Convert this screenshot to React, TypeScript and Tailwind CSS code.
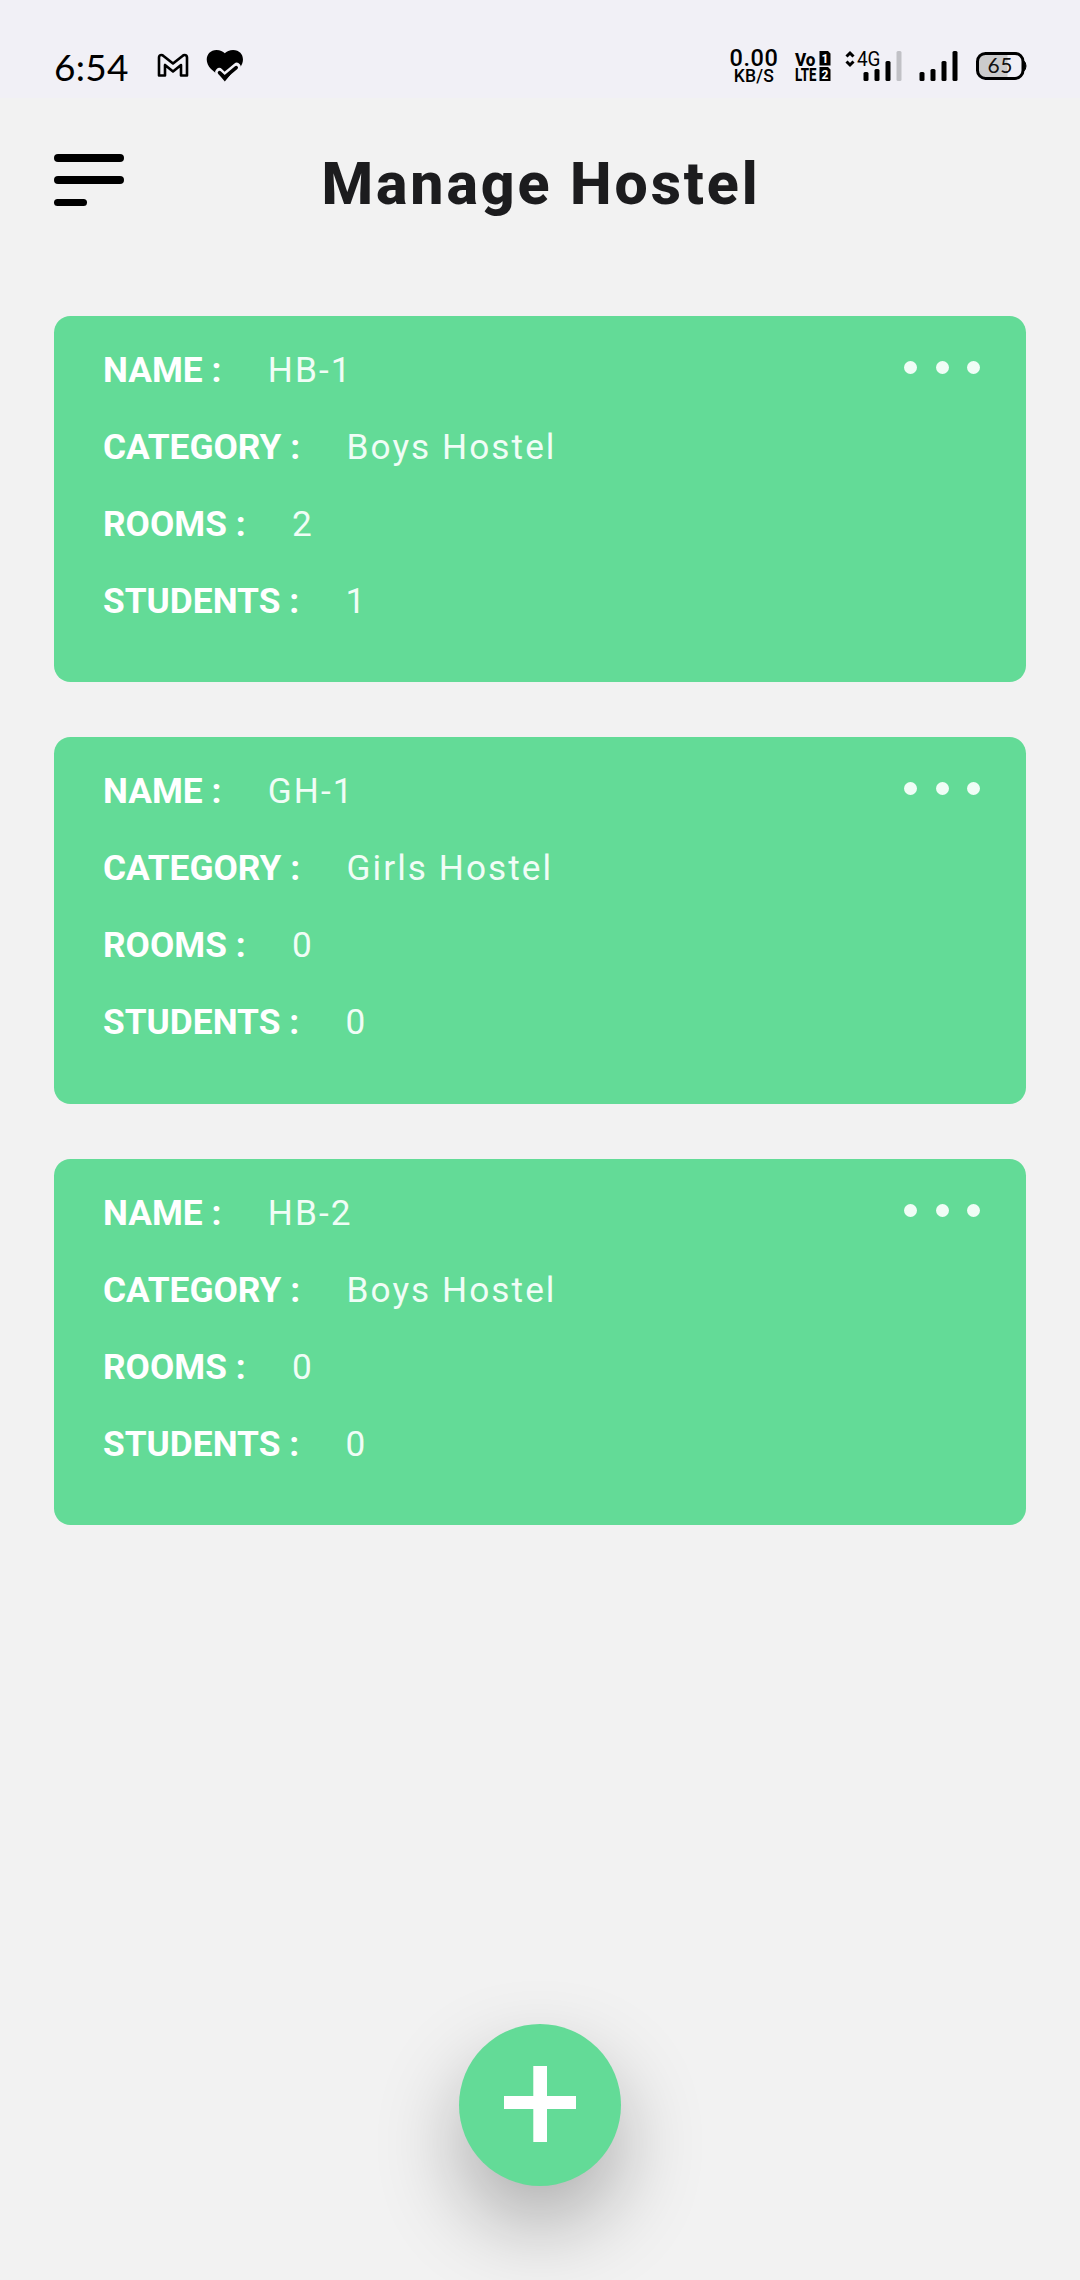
import React from "react";

type Hostel = { name: string; category: string; rooms: number; students: number };

const hostels: Hostel[] = [
  { name: "HB-1", category: "Boys Hostel", rooms: 2, students: 1 },
  { name: "GH-1", category: "Girls Hostel", rooms: 0, students: 0 },
  { name: "HB-2", category: "Boys Hostel", rooms: 0, students: 0 },
];

function GmailIcon() {
  return (
    <svg className="ml-[27px] mt-[53px] h-[25px] w-[32px]" viewBox="0 0 32 25" fill="none" stroke="#000" strokeWidth="2.6" strokeLinejoin="round">
      <path d="M2 22.500V4.500Q2 2 4.500 2Q5.500 2 6.500 3L16 10.500L25.500 3Q26.500 2 27.500 2Q30 2 30 4.500V22.500H24V12L16 18.500L8 12V22.500Z" />
    </svg>
  );
}

function HeartIcon() {
  return (
    <svg className="ml-[17px] mt-[49px] h-[34px] w-[38px]" viewBox="0 0 38 34">
      <path d="M18.800 32L5 20C-3 12 1 1 10.500 1C14 1 17 2.300 18.800 4.300C20.600 2.300 23.600 1 27.100 1C36.500 1 40 11 34 18.500Z" fill="#000" />
      <path d="M6 27L13.300 23L18.300 28L31 17.500L38 20V34H6Z" fill="#f1f0f6" />
      <path d="M13.300 23L18.300 28L30.700 17.800" fill="none" stroke="#f1f0f6" strokeWidth="8" strokeLinejoin="round" strokeLinecap="round" />
      <path d="M13.500 23.600L18.600 28.300L30.200 18.600" fill="none" stroke="#000" strokeWidth="3.600" strokeLinejoin="round" strokeLinecap="round" />
      <path d="M12.500 25L18.800 32.500L25 25L18.600 27Z" fill="#000" />
    </svg>
  );
}

function VolteIcon() {
  return (
    <svg className="mt-[50px] ml-[16px] h-[32px] w-[37px] overflow-visible" viewBox="0 0 37 32" fontFamily="Roboto" fontWeight="800">
      <text x="0" y="15.500" fontSize="18.500" textLength="20.500" lengthAdjust="spacingAndGlyphs">Vo</text>
      <text x="0" y="31" fontSize="18.500" textLength="21.500" lengthAdjust="spacingAndGlyphs">LTE</text>
      <path d="M24.500 1H33L35.500 3.500V15.500H24.500ZM24.500 17H33L35.500 19.500V31H24.500Z" />
      <text x="30" y="12.500" fontSize="12" textAnchor="middle" fill="#fff">1</text>
      <text x="30" y="28.500" fontSize="12" textAnchor="middle" fill="#fff">2</text>
    </svg>
  );
}

function MobileData() {
  return (
    <svg className="ml-[13px] mt-[50px] h-[32px] w-[57px] overflow-visible" viewBox="0 0 57 32">
      <path d="M1.500 6.500L5 3L8.500 6.500M1.500 11.500L5 15L8.500 11.500" fill="none" stroke="#000" strokeWidth="3" />
      <text x="12" y="15.800" fontFamily="Roboto" fontSize="20.500" textLength="23.500" lengthAdjust="spacingAndGlyphs">4G</text>
      <rect x="18.500" y="22" width="5" height="9" rx="1.500" />
      <rect x="29.500" y="19" width="5" height="12" rx="1.500" />
      <rect x="40.500" y="11" width="5" height="20" rx="1.500" />
      <rect x="51.500" y="1" width="5" height="30" rx="1.500" fill="#c1c1c6" />
    </svg>
  );
}

function SignalIcon() {
  return (
    <svg className="ml-[17px] mt-[50px] h-[32px] w-[39px]" viewBox="0 0 39 32">
      <rect x="0.500" y="22" width="5" height="9" rx="1.500" />
      <rect x="11.500" y="19" width="5" height="12" rx="1.500" />
      <rect x="22.500" y="11" width="5" height="20" rx="1.500" />
      <rect x="33.500" y="1" width="5" height="30" rx="1.500" />
    </svg>
  );
}

function BatteryIcon() {
  return (
    <svg className="ml-[18px] mt-[51px] h-[30px] w-[52px]" viewBox="0 0 52 30">
      <rect x="1.500" y="2.400" width="45.500" height="25" rx="8" fill="#f1f0f6" />
      <path d="M31.500 2.400H9.500a8 8 0 0 0-8 8v9a8 8 0 0 0 8 8H31.500Z" fill="#cbcbcc" />
      <rect x="1.500" y="2.400" width="45.500" height="25" rx="8" fill="none" stroke="#000" strokeWidth="3" />
      <path d="M47.500 9.500q2.500 2 2.500 5.500t-2.500 5.500Z" stroke="#000" strokeWidth="1" />
      <text x="11.500" y="21.800" fontFamily="Lato" fontSize="21" textLength="25" fill="#111">65</text>
    </svg>
  );
}

function StatusBar() {
  return (
    <header className="flex h-[98px] items-start bg-[#f1f0f6] pl-[54px] font-[Lato,sans-serif] text-black">
      <span className="mt-[46px] w-[76px] text-[37px] leading-[42px] tracking-[0.300px] whitespace-nowrap">6:54</span>
      <GmailIcon />
      <HeartIcon />
      <div className="mt-[48px] ml-auto flex w-[50px] flex-col items-center font-[Roboto,sans-serif] font-medium">
        <span className="text-[23.500px] leading-[20px] tracking-[0.600px]">0.00</span>
        <span className="text-[17.500px] leading-[17px] tracking-[0.200px]">KB/S</span>
      </div>
      <div className="flex items-start pr-[52px] font-[Roboto,sans-serif]">
        <VolteIcon />
        <MobileData />
        <SignalIcon />
        <BatteryIcon />
      </div>
    </header>
  );
}

function Field({ label, value }: { label: string; value: string | number }) {
  return (
    <div className="flex h-[77px] items-center">
      <span className="text-[35.300px] font-bold">{label} :</span>
      <span className="ml-[46.400px] text-[35.200px] tracking-[2.050px] text-[#f0fdf6]">{value}</span>
    </div>
  );
}

function HostelCard({ hostel }: { hostel: Hostel }) {
  return (
    <article className="flex h-[366.500px] justify-between rounded-[16.500px] bg-[#63db97] pr-[46px] pl-[49px] text-white">
      <div className="pt-[16px] whitespace-nowrap">
        <Field label="NAME" value={hostel.name} />
        <Field label="CATEGORY" value={hostel.category} />
        <Field label="ROOMS" value={hostel.rooms} />
        <Field label="STUDENTS" value={hostel.students} />
      </div>
      <button aria-label="More options" className="mt-[45px] flex h-[13px] gap-[18.500px]">
        <span className="size-[13px] rounded-full bg-[#f0fdf6]" />
        <span className="size-[13px] rounded-full bg-[#f0fdf6]" />
        <span className="size-[13px] rounded-full bg-[#f0fdf6]" />
      </button>
    </article>
  );
}

export default function App() {
  return (
    <div className="flex h-[2280px] w-[1080px] flex-col overflow-hidden bg-[#f2f2f2] font-[Roboto,sans-serif]">
      <StatusBar />
      <div className="grid h-[217.800px] grid-cols-[1fr_auto_1fr] items-start px-[54px]">
        <button aria-label="Menu" className="mt-[56px] flex flex-col items-start gap-[14.500px]">
          <span className="h-[7.800px] w-[70px] rounded-full bg-black" />
          <span className="h-[7.800px] w-[70px] rounded-full bg-black" />
          <span className="h-[7.800px] w-[33px] rounded-full bg-black" />
        </button>
        <h1 className="mt-[51px] -mr-[2px] text-[59px] leading-[70px] font-extrabold tracking-[2.900px] text-[#1c1c1e]">Manage Hostel</h1>
      </div>
      <main className="flex flex-col gap-[55px] px-[54px]">
        {hostels.map((h) => (
          <HostelCard key={h.name} hostel={h} />
        ))}
      </main>
      <button
        aria-label="Add hostel"
        className="mx-auto mt-auto mb-[94px] flex size-[162px] shrink-0 items-center justify-center rounded-full bg-[#63db97] shadow-[0_38px_84px_rgba(0,0,0,0.29)]"
      >
        <svg className="mb-[2px] h-[76px] w-[72px]" viewBox="0 0 72 76" fill="#fff">
          <path d="M29.300 0H43V30H72V43H43V76H29.300V43H0V30H29.300Z" />
        </svg>
      </button>
    </div>
  );
}
